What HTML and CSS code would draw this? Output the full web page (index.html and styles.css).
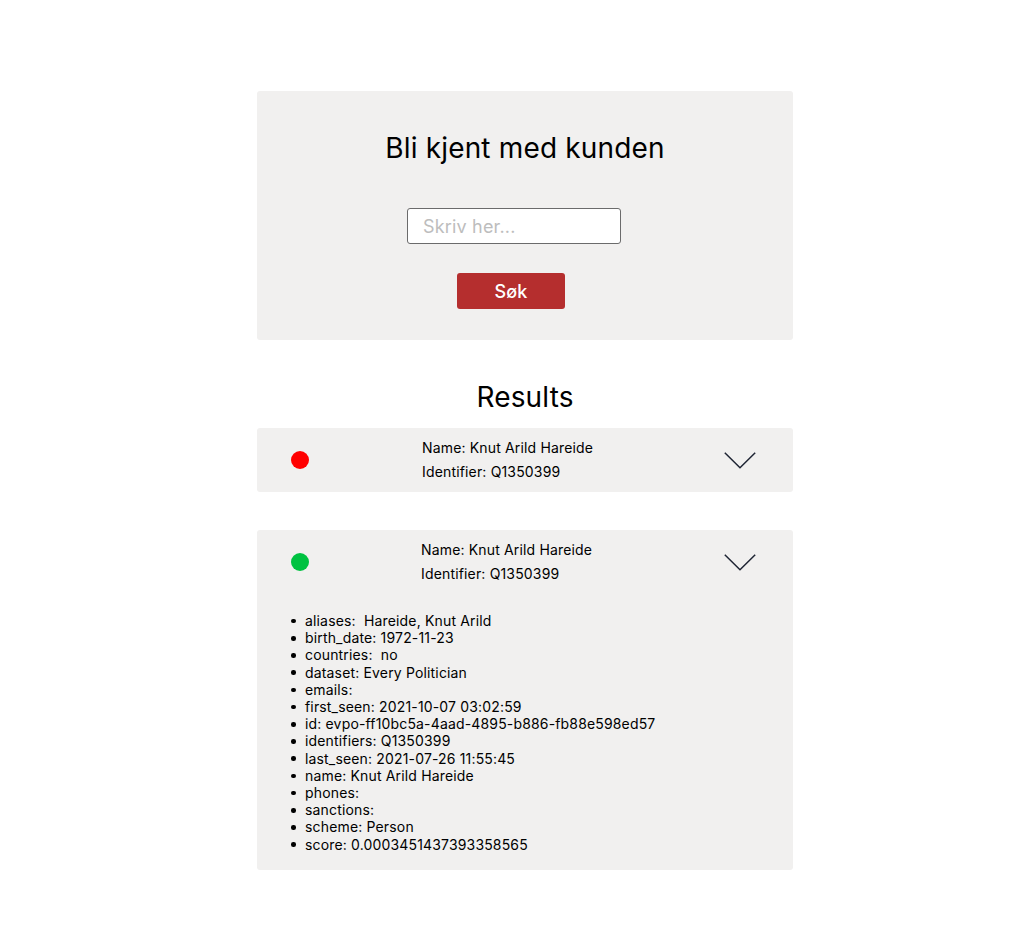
FILE: index.html
```html
<!DOCTYPE html>
<html lang="no">
<head>
<meta charset="utf-8">
<title>Bli kjent med kunden</title>
<link rel="stylesheet" href="styles.css">
</head>
<body>
<main class="page">
  <section class="search-panel">
    <h1 class="panel-title">Bli kjent med kunden</h1>
    <input class="search-input" type="text" placeholder="Skriv her...">
    <button class="search-button" type="button">Søk</button>
  </section>

  <h2 class="results-title">Results</h2>

  <div class="result-card">
    <div class="card-header">
      <span class="status-dot dot-red"></span>
      <div class="card-info">
        <div class="info-line">Name: Knut Arild Hareide</div>
        <div class="info-line">Identifier: Q1350399</div>
      </div>
      <svg class="chevron" width="32" height="17" viewBox="0 0 32 17" aria-hidden="true">
        <polyline points="0.8,0.8 16,15.8 31.2,0.8" fill="none" stroke="#1e2433" stroke-width="1.5"/>
      </svg>
    </div>
  </div>

  <div class="result-card card-open">
    <div class="card-header">
      <span class="status-dot dot-green"></span>
      <div class="card-info">
        <div class="info-line">Name: Knut Arild Hareide</div>
        <div class="info-line">Identifier: Q1350399</div>
      </div>
      <svg class="chevron" width="32" height="17" viewBox="0 0 32 17" aria-hidden="true">
        <polyline points="0.8,0.8 16,15.8 31.2,0.8" fill="none" stroke="#1e2433" stroke-width="1.5"/>
      </svg>
    </div>
    <ul class="detail-list">
      <li>aliases:&nbsp; Hareide, Knut Arild</li>
      <li>birth_date: 1972-11-23</li>
      <li>countries:&nbsp; no</li>
      <li>dataset: Every Politician</li>
      <li>emails:</li>
      <li>first_seen: 2021-10-07 03:02:59</li>
      <li>id: evpo-ff10bc5a-4aad-4895-b886-fb88e598ed57</li>
      <li>identifiers: Q1350399</li>
      <li>last_seen: 2021-07-26 11:55:45</li>
      <li>name: Knut Arild Hareide</li>
      <li>phones:</li>
      <li>sanctions:</li>
      <li>scheme: Person</li>
      <li>score: 0.0003451437393358565</li>
    </ul>
  </div>
</main>
</body>
</html>
```

FILE: styles.css
```css
* {
  box-sizing: border-box;
}

html, body {
  margin: 0;
  padding: 0;
  background: #ffffff;
}

body {
  font-family: Inter, "Noto Sans", "Liberation Sans", sans-serif;
  color: #000000;
  letter-spacing: 0.01em;
}

.page {
  width: 536px;
  margin: 91px 0 0 257px;
  display: flex;
  flex-direction: column;
}

.search-panel {
  background: #f1f0ef;
  border-radius: 3px;
  padding: 40px 0 31px;
  display: flex;
  flex-direction: column;
  align-items: flex-start;
}

.panel-title {
  align-self: stretch;
  margin: 0;
  text-align: center;
  font-size: 28px;
  font-weight: 400;
  line-height: 34px;
}

.search-input {
  margin: 43px 0 0 150px;
  width: 214px;
  height: 36px;
  padding: 0 15px;
  border: 1px solid #6b6b6b;
  border-radius: 3px;
  background: #ffffff;
  font-family: inherit;
  font-size: 18px;
  letter-spacing: 0.01em;
  color: #000;
  outline: none;
}

.search-input::placeholder {
  color: #bdbdbd;
}

.search-button {
  margin: 29px 0 0 200px;
  width: 108px;
  height: 36px;
  border: none;
  border-radius: 3px;
  background: #b52e2e;
  color: #ffffff;
  font-family: inherit;
  font-size: 18px;
  font-weight: 500;
  letter-spacing: 0.01em;
  padding: 0;
}

.results-title {
  margin: 40px 0 14px;
  text-align: center;
  font-size: 28px;
  font-weight: 400;
  line-height: 34px;
}

.result-card {
  background: #f1f0ef;
  border-radius: 3px;
  margin-bottom: 38px;
}

.card-header {
  display: flex;
  align-items: center;
  padding: 8px 37px 8px 34px;
}

.status-dot {
  width: 18px;
  height: 18px;
  border-radius: 50%;
  flex: none;
}

.dot-red {
  background: #ff0000;
}

.dot-green {
  background: #00c241;
}

.card-info {
  flex: 1;
  margin-left: 113px;
  font-size: 14px;
  line-height: 24px;
}

.chevron {
  flex: none;
  display: block;
}

.card-open .card-info {
  margin-left: 112px;
}

.detail-list {
  list-style: none;
  margin: 18px 0 0;
  padding: 0 0 17px 34px;
  font-size: 14px;
  line-height: 17.2px;
}

.detail-list li {
  display: flex;
  align-items: center;
}

.detail-list li::before {
  content: "";
  flex: none;
  width: 4.5px;
  height: 4.5px;
  border-radius: 50%;
  background: #000;
  margin: 1px 9.5px 0 0;
}
```
